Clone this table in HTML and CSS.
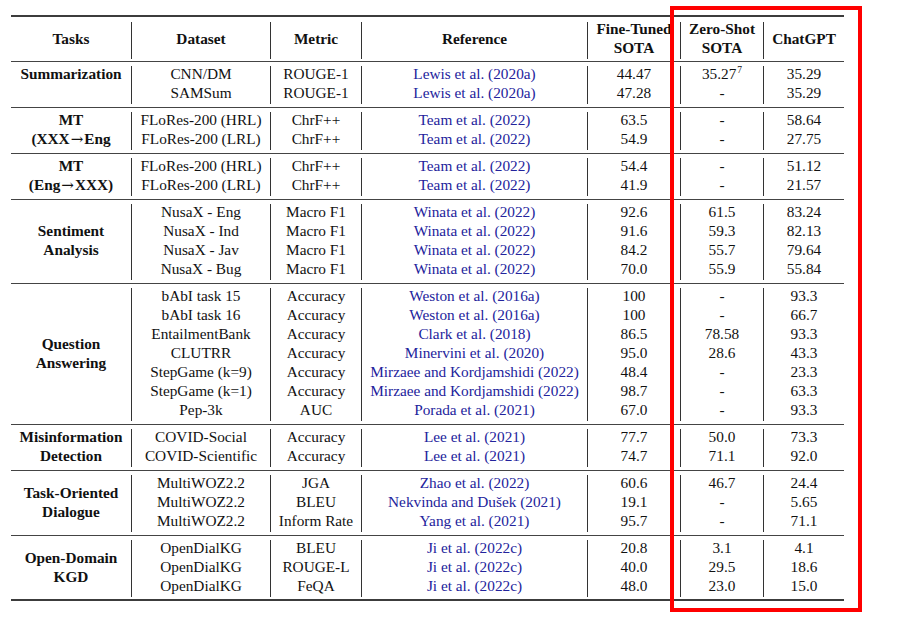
FILE: index.html
```html
<!DOCTYPE html>
<html>
<head>
<meta charset="utf-8">
<link rel="stylesheet" href="styles.css">
</head>
<body>
<div class="page">
  <div class="tbl">
    <div class="sec head">
      <div class="col c1 hd"><div class="tk">Tasks</div></div>
      <div class="col c2 hd"><div class="tk">Dataset</div></div>
      <div class="col c3 hd"><div class="tk">Metric</div></div>
      <div class="col c4 hd"><div class="tk">Reference</div></div>
      <div class="col c5 hd"><div class="tk">Fine-Tuned<br>SOTA</div></div>
      <div class="col c6 hd"><div class="tk">Zero-Shot<br>SOTA</div></div>
      <div class="col c7 hd"><div class="tk">ChatGPT</div></div>
    </div>

    <div class="sec">
      <div class="col c1 bold"><span>Summarization</span></div>
      <div class="col c2"><span>CNN/DM</span><span>SAMSum</span></div>
      <div class="col c3"><span>ROUGE-1</span><span>ROUGE-1</span></div>
      <div class="col c4 ref"><span>Lewis et al. (2020a)</span><span>Lewis et al. (2020a)</span></div>
      <div class="col c5"><span>44.47</span><span>47.28</span></div>
      <div class="col c6"><span>35.27<sup class="fn">7</sup></span><span>-</span></div>
      <div class="col c7"><span>35.29</span><span>35.29</span></div>
    </div>

    <div class="sec">
      <div class="col c1 bold"><span>MT</span><span>(XXX<b class="arr">→</b>Eng</span></div>
      <div class="col c2"><span>FLoRes-200 (HRL)</span><span>FLoRes-200 (LRL)</span></div>
      <div class="col c3"><span>ChrF++</span><span>ChrF++</span></div>
      <div class="col c4 ref"><span>Team et al. (2022)</span><span>Team et al. (2022)</span></div>
      <div class="col c5"><span>63.5</span><span>54.9</span></div>
      <div class="col c6"><span>-</span><span>-</span></div>
      <div class="col c7"><span>58.64</span><span>27.75</span></div>
    </div>

    <div class="sec">
      <div class="col c1 bold"><span>MT</span><span>(Eng<b class="arr">→</b>XXX)</span></div>
      <div class="col c2"><span>FLoRes-200 (HRL)</span><span>FLoRes-200 (LRL)</span></div>
      <div class="col c3"><span>ChrF++</span><span>ChrF++</span></div>
      <div class="col c4 ref"><span>Team et al. (2022)</span><span>Team et al. (2022)</span></div>
      <div class="col c5"><span>54.4</span><span>41.9</span></div>
      <div class="col c6"><span>-</span><span>-</span></div>
      <div class="col c7"><span>51.12</span><span>21.57</span></div>
    </div>

    <div class="sec">
      <div class="col c1 task"><div class="tk">Sentiment<br>Analysis</div></div>
      <div class="col c2"><span>NusaX - Eng</span><span>NusaX - Ind</span><span>NusaX - Jav</span><span>NusaX - Bug</span></div>
      <div class="col c3"><span>Macro F1</span><span>Macro F1</span><span>Macro F1</span><span>Macro F1</span></div>
      <div class="col c4 ref"><span>Winata et al. (2022)</span><span>Winata et al. (2022)</span><span>Winata et al. (2022)</span><span>Winata et al. (2022)</span></div>
      <div class="col c5"><span>92.6</span><span>91.6</span><span>84.2</span><span>70.0</span></div>
      <div class="col c6"><span>61.5</span><span>59.3</span><span>55.7</span><span>55.9</span></div>
      <div class="col c7"><span>83.24</span><span>82.13</span><span>79.64</span><span>55.84</span></div>
    </div>

    <div class="sec">
      <div class="col c1 task"><div class="tk">Question<br>Answering</div></div>
      <div class="col c2"><span>bAbI task 15</span><span>bAbI task 16</span><span>EntailmentBank</span><span>CLUTRR</span><span>StepGame (k=9)</span><span>StepGame (k=1)</span><span>Pep-3k</span></div>
      <div class="col c3"><span>Accuracy</span><span>Accuracy</span><span>Accuracy</span><span>Accuracy</span><span>Accuracy</span><span>Accuracy</span><span>AUC</span></div>
      <div class="col c4 ref"><span>Weston et al. (2016a)</span><span>Weston et al. (2016a)</span><span>Clark et al. (2018)</span><span>Minervini et al. (2020)</span><span>Mirzaee and Kordjamshidi (2022)</span><span>Mirzaee and Kordjamshidi (2022)</span><span>Porada et al. (2021)</span></div>
      <div class="col c5"><span>100</span><span>100</span><span>86.5</span><span>95.0</span><span>48.4</span><span>98.7</span><span>67.0</span></div>
      <div class="col c6"><span>-</span><span>-</span><span>78.58</span><span>28.6</span><span>-</span><span>-</span><span>-</span></div>
      <div class="col c7"><span>93.3</span><span>66.7</span><span>93.3</span><span>43.3</span><span>23.3</span><span>63.3</span><span>93.3</span></div>
    </div>

    <div class="sec">
      <div class="col c1 bold"><span>Misinformation</span><span>Detection</span></div>
      <div class="col c2"><span>COVID-Social</span><span>COVID-Scientific</span></div>
      <div class="col c3"><span>Accuracy</span><span>Accuracy</span></div>
      <div class="col c4 ref"><span>Lee et al. (2021)</span><span>Lee et al. (2021)</span></div>
      <div class="col c5"><span>77.7</span><span>74.7</span></div>
      <div class="col c6"><span>50.0</span><span>71.1</span></div>
      <div class="col c7"><span>73.3</span><span>92.0</span></div>
    </div>

    <div class="sec">
      <div class="col c1 task"><div class="tk">Task-Oriented<br>Dialogue</div></div>
      <div class="col c2"><span>MultiWOZ2.2</span><span>MultiWOZ2.2</span><span>MultiWOZ2.2</span></div>
      <div class="col c3"><span>JGA</span><span>BLEU</span><span>Inform Rate</span></div>
      <div class="col c4 ref"><span>Zhao et al. (2022)</span><span>Nekvinda and Dušek (2021)</span><span>Yang et al. (2021)</span></div>
      <div class="col c5"><span>60.6</span><span>19.1</span><span>95.7</span></div>
      <div class="col c6"><span>46.7</span><span>-</span><span>-</span></div>
      <div class="col c7"><span>24.4</span><span>5.65</span><span>71.1</span></div>
    </div>

    <div class="sec last">
      <div class="col c1 task"><div class="tk">Open-Domain<br>KGD</div></div>
      <div class="col c2"><span>OpenDialKG</span><span>OpenDialKG</span><span>OpenDialKG</span></div>
      <div class="col c3"><span>BLEU</span><span>ROUGE-L</span><span>FeQA</span></div>
      <div class="col c4 ref"><span>Ji et al. (2022c)</span><span>Ji et al. (2022c)</span><span>Ji et al. (2022c)</span></div>
      <div class="col c5"><span>20.8</span><span>40.0</span><span>48.0</span></div>
      <div class="col c6"><span>3.1</span><span>29.5</span><span>23.0</span></div>
      <div class="col c7"><span>4.1</span><span>18.6</span><span>15.0</span></div>
    </div>
  </div>
  <div class="highlight"></div>
</div>
</body>
</html>
```

FILE: styles.css
```css
html, body {
  margin: 0;
  padding: 0;
  background: #fff;
}

.page {
  position: relative;
  width: 905px;
  height: 619px;
  padding: 15px 0 0 11px;
  box-sizing: border-box;
  font-family: "Liberation Serif", "Times New Roman", serif;
  font-size: 15.3px;
  color: #111;
}

.tbl {
  width: 833px;
  border-top: 2px solid #3c3c3c;
  border-bottom: 2px solid #3c3c3c;
}

.sec {
  display: grid;
  grid-template-columns: 120px 139px 91px 226px 93px 83px 81px;
  padding: 4px 0 3px 0;
  border-bottom: 1px solid #444;
}

.sec.head {
  padding: 5px 0 2px 0;
  height: 45px;
  box-sizing: border-box;
}

.sec.last {
  border-bottom: none;
  padding-bottom: 2px;
}

.col {
  display: flex;
  flex-direction: column;
  align-items: center;
  justify-content: flex-start;
  text-align: center;
  white-space: nowrap;
  box-sizing: border-box;
  line-height: 19px;
}

.col + .col {
  border-left: 1px solid #333;
}

.col > span {
  display: block;
  height: 19px;
  line-height: 15px;
  padding-bottom: 4px;
  box-sizing: border-box;
}

.bold {
  font-weight: 700;
}

.hd,
.task {
  font-weight: 700;
  justify-content: center;
}

.tk {
  line-height: 19px;
  margin-top: -4px;
  text-align: center;
}

.hd .tk {
  margin-top: -5px;
}

.arr {
  font-weight: normal;
  font-family: "DejaVu Serif", "Liberation Serif", serif;
  font-size: 15px;
  line-height: 0;
  margin: 0 1px;
}

.ref {
  color: #23239c;
}

.fn {
  font-size: 9.5px;
  line-height: 0;
  vertical-align: 6px;
  margin-left: 1px;
}

.highlight {
  position: absolute;
  left: 670px;
  top: 6px;
  width: 192px;
  height: 606px;
  box-sizing: border-box;
  border: 4px solid #ff0000;
}
```
